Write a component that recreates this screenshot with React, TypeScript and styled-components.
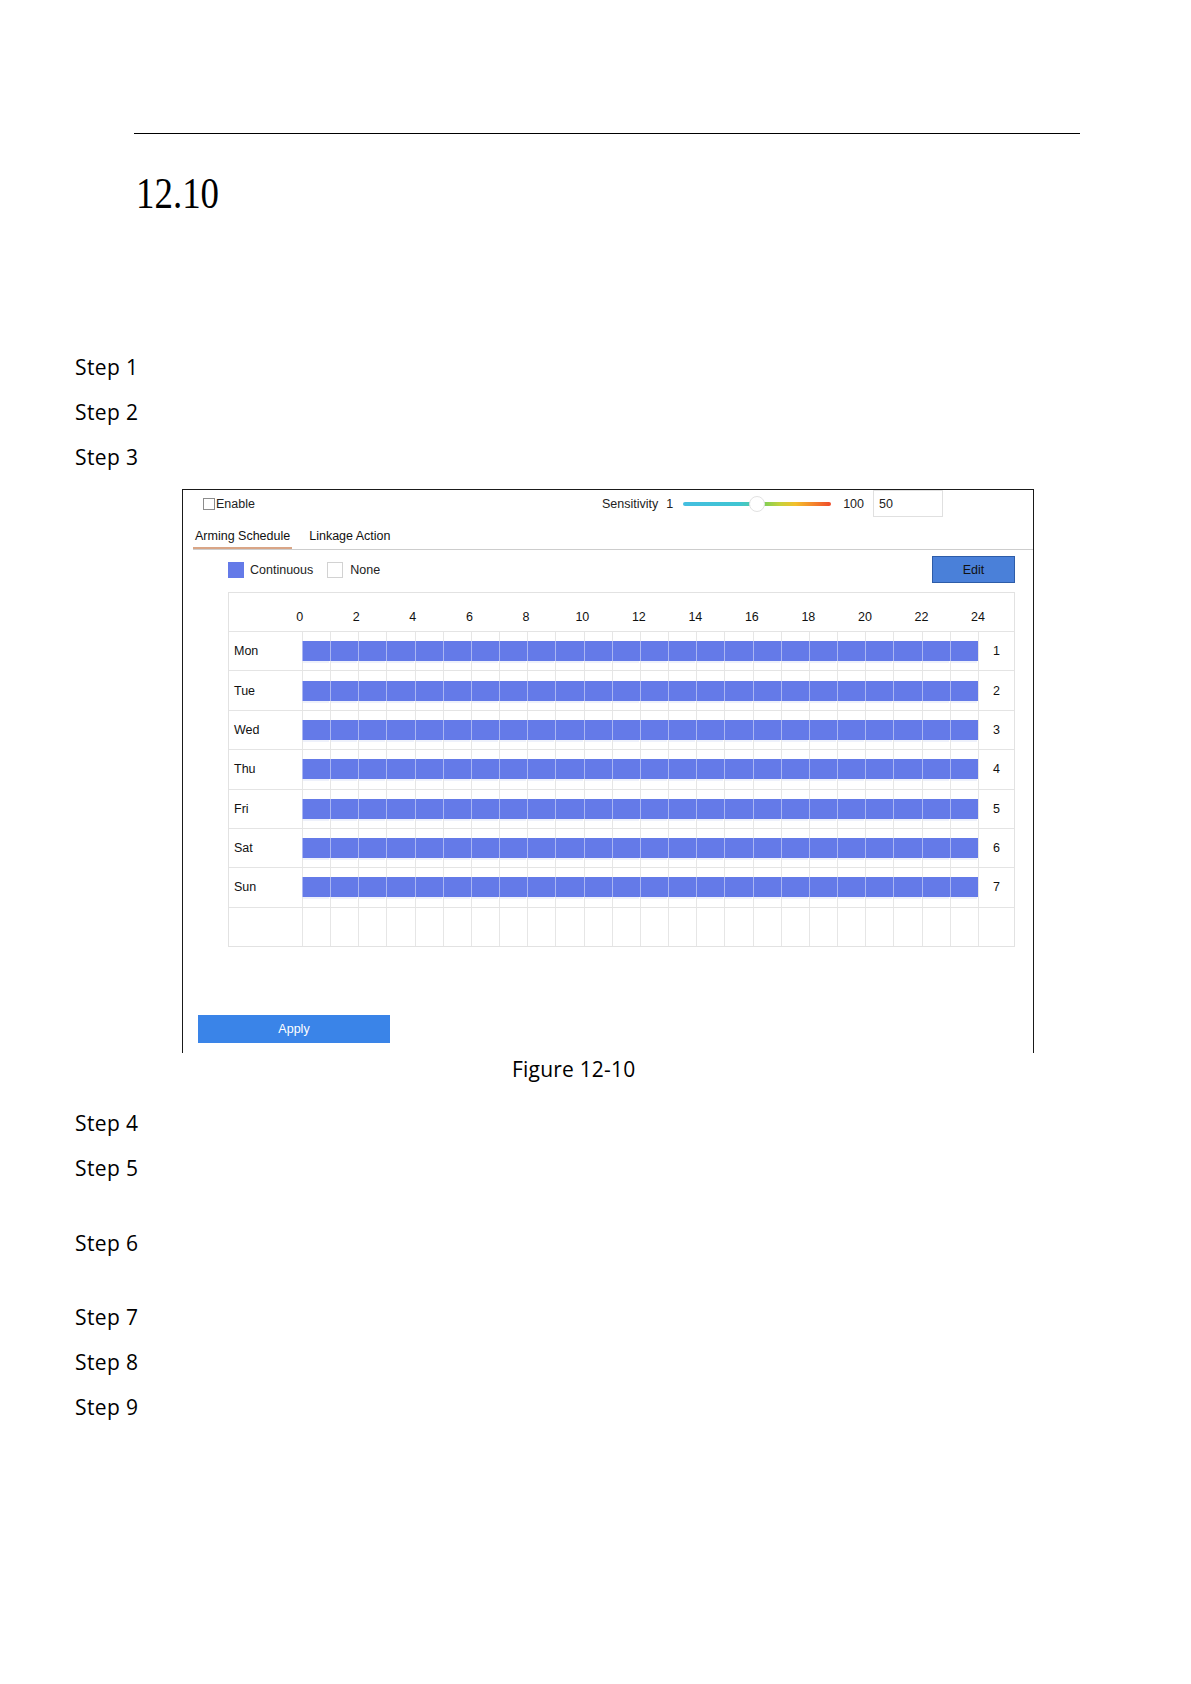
import * as React from 'react';
import styled, { createGlobalStyle } from 'styled-components';

const GlobalStyle = createGlobalStyle`
  html, body {
    margin: 0;
    padding: 0;
    background: #fff;
  }
  body {
    font-family: "Open Sans", "Liberation Sans", sans-serif;
    color: #000;
  }
`;

const BAR_BLUE = '#647ae8';

const Page = styled.div`
  width: 1191px;
  min-height: 1684px;
  padding-top: 133px;
  box-sizing: border-box;
`;

const HeaderRule = styled.div`
  margin-left: 134px;
  width: 946px;
  height: 1px;
  background: #000;
`;

const SectionNumber = styled.h1`
  margin: 35px 0 0 136px;
  font-family: "Liberation Serif", "DejaVu Serif", serif;
  font-weight: normal;
  font-size: 45px;
  line-height: 48px;
  transform: scaleX(0.82);
  transform-origin: left center;
`;

const StepList = styled.ol<{ $top: number }>`
  list-style: none;
  margin: ${(p) => p.$top}px 0 0 75px;
  padding: 0;
  font-size: 21px;
  letter-spacing: 0.4px;
  line-height: 45px;
`;

const Step = styled.li<{ $after?: number }>`
  margin-bottom: ${(p) => p.$after ?? 0}px;
`;

/* ---------- figure: the recorder's schedule panel ---------- */

const Figure = styled.div`
  margin: 9px 0 0 182px;
  width: 852px;
  box-sizing: border-box;
  padding-bottom: 10px;
  border: 1px solid #1a1a1a;
  border-bottom: none;
  font-family: "Liberation Sans", Arial, sans-serif;
  font-size: 12.5px;
  color: #222;
`;

const TopRow = styled.div`
  display: flex;
  align-items: center;
  height: 27px;
  padding: 0 90px 0 20px;
`;

const CheckLabel = styled.label`
  display: flex;
  align-items: center;
  gap: 1px;
`;

const CheckBox = styled.span<{ $size: number }>`
  display: inline-block;
  width: ${(p) => p.$size}px;
  height: ${(p) => p.$size}px;
  box-sizing: border-box;
  border: 1px solid ${(p) => (p.$size > 14 ? '#d2d2d2' : '#8c8c8c')};
  background: #fff;
`;

const SensitivityGroup = styled.div`
  margin-left: auto;
  display: flex;
  align-items: center;
`;

const SliderTrack = styled.div`
  position: relative;
  width: 148px;
  height: 4px;
  margin: 0 12px 0 10px;
  border-radius: 2px;
  background: linear-gradient(
    90deg,
    #44bee0 0%,
    #3fc5d2 38%,
    #52cba6 48%,
    #86cf52 56%,
    #c8d13a 66%,
    #f3bf2b 76%,
    #f4852c 88%,
    #ef4a2a 100%
  );
`;

const SliderThumb = styled.span`
  position: absolute;
  left: 50%;
  top: 50%;
  width: 16px;
  height: 16px;
  box-sizing: border-box;
  border-radius: 50%;
  border: 1px solid #e2e2e2;
  background: #fff;
  transform: translate(-50%, -50%);
`;

const ValueBox = styled.div`
  margin-left: 9px;
  width: 70px;
  height: 27px;
  box-sizing: border-box;
  border: 1px solid #e0e0e0;
  padding-left: 5px;
  display: flex;
  align-items: center;
`;

const TabBar = styled.div`
  display: flex;
  gap: 15px;
  margin-left: 10px;
  border-bottom: 1px solid #cdcdcd;
`;

const Tab = styled.div<{ $active?: boolean }>`
  padding: 12px 2px 3px;
  line-height: 15px;
  border-bottom: 2px solid ${(p) => (p.$active ? '#d9a586' : 'transparent')};
  color: #111;
`;

const LegendRow = styled.div`
  display: flex;
  align-items: center;
  height: 27px;
  margin: 6px 18px 0 45px;
`;

const Swatch = styled.span`
  width: 16px;
  height: 16px;
  background: ${BAR_BLUE};
`;

const LegendText = styled.span<{ $gap: number }>`
  margin-left: ${(p) => p.$gap}px;
  margin-right: 14px;
`;

const EditButton = styled.button`
  margin-left: auto;
  width: 83px;
  height: 27px;
  box-sizing: border-box;
  border: 1px solid #2d5ca8;
  background: #4a80d9;
  color: #111;
  font-family: inherit;
  font-size: 12.5px;
  padding: 0;
`;

const ScheduleGrid = styled.div`
  display: flex;
  flex-direction: column;
  height: 355px;
  box-sizing: border-box;
  margin: 9px 18px 0 45px;
  border: 1px solid #e2e2e2;
`;

const columns = '73px repeat(24, 1fr) 36px';

const HeaderRow = styled.div`
  display: grid;
  grid-template-columns: ${columns};
  height: 38px;
  align-items: end;
`;

const HourScale = styled.div`
  grid-column: 2 / 26;
  margin: 0 -4.1667% 0 -4.5%;
  display: grid;
  grid-template-columns: repeat(13, 1fr);
  padding-bottom: 6px;
  line-height: 15px;
  text-align: center;
  color: #111;
`;

const DayRow = styled.div`
  flex: 1;
  display: grid;
  grid-template-columns: ${columns};
  border-top: 1px solid #e4e4e4;
`;

const DayLabel = styled.div`
  align-self: center;
  padding-left: 5px;
  color: #111;
`;

const HourCell = styled.div`
  display: flex;
  align-items: center;
  border-left: 1px solid #e6e6e6;
`;

const BarPiece = styled.div`
  flex: 1;
  height: 20px;
  margin-left: -1px;
  border-left: 1px solid rgba(255, 255, 255, 0.45);
  background: ${BAR_BLUE};
  box-shadow: 0 3px 0 -1px #eef1fb;
`;

const RowNumber = styled.div`
  display: flex;
  align-items: center;
  justify-content: center;
  border-left: 1px solid #e6e6e6;
  color: #111;
`;

const ApplyButton = styled.button`
  display: block;
  margin: 68px 0 0 15px;
  width: 192px;
  height: 28px;
  border: none;
  padding: 0;
  background: #3a84e8;
  color: #fff;
  font-family: inherit;
  font-size: 12.5px;
`;

const Caption = styled.div`
  margin-left: 512px;
  padding-top: 2px;
  font-size: 21px;
  letter-spacing: 0.2px;
  line-height: 28px;
`;

const days = ['Mon', 'Tue', 'Wed', 'Thu', 'Fri', 'Sat', 'Sun'];
const hours = Array.from({ length: 24 }, (_, i) => i);
const hourMarks = Array.from({ length: 13 }, (_, i) => i * 2);

function ScheduleRow({ label, index }: { label?: string; index?: number }) {
  return (
    <DayRow>
      <DayLabel>{label}</DayLabel>
      {hours.map((h) => (
        <HourCell key={h}>{label && <BarPiece />}</HourCell>
      ))}
      <RowNumber>{index}</RowNumber>
    </DayRow>
  );
}

function MotionSchedulePanel() {
  return (
    <Figure>
      <TopRow>
        <CheckLabel>
          <CheckBox $size={12} />
          Enable
        </CheckLabel>
        <SensitivityGroup>
          <span>Sensitivity</span>
          <span style={{ marginLeft: 8 }}>1</span>
          <SliderTrack>
            <SliderThumb />
          </SliderTrack>
          <span>100</span>
          <ValueBox>50</ValueBox>
        </SensitivityGroup>
      </TopRow>

      <TabBar>
        <Tab $active>Arming Schedule</Tab>
        <Tab>Linkage Action</Tab>
      </TabBar>

      <LegendRow>
        <Swatch />
        <LegendText $gap={6}>Continuous</LegendText>
        <CheckBox $size={16} />
        <LegendText $gap={7}>None</LegendText>
        <EditButton>Edit</EditButton>
      </LegendRow>

      <ScheduleGrid>
        <HeaderRow>
          <HourScale>
            {hourMarks.map((h) => (
              <span key={h}>{h}</span>
            ))}
          </HourScale>
        </HeaderRow>
        {days.map((d, i) => (
          <ScheduleRow key={d} label={d} index={i + 1} />
        ))}
        <ScheduleRow />
      </ScheduleGrid>

      <ApplyButton>Apply</ApplyButton>
    </Figure>
  );
}

export default function App() {
  return (
    <Page>
      <GlobalStyle />
      <HeaderRule />
      <SectionNumber>12.10</SectionNumber>

      <StepList $top={128}>
        <Step>Step 1</Step>
        <Step>Step 2</Step>
        <Step>Step 3</Step>
      </StepList>

      <MotionSchedulePanel />
      <Caption>Figure 12-10</Caption>

      <StepList $top={18}>
        <Step>Step 4</Step>
        <Step $after={30}>Step 5</Step>
        <Step $after={29}>Step 6</Step>
        <Step>Step 7</Step>
        <Step>Step 8</Step>
        <Step>Step 9</Step>
      </StepList>
    </Page>
  );
}
